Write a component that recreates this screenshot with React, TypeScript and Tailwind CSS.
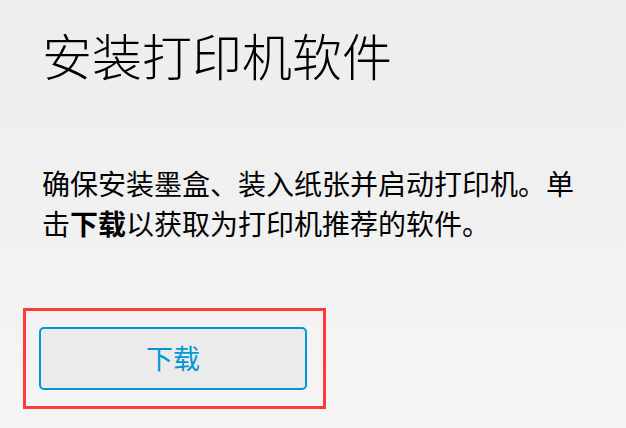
export default function App() {
  return (
    <div className="h-[428px] w-[626px] overflow-hidden bg-gradient-to-b from-[#ededed] to-[#f5f5f5] font-['Noto_Sans_CJK_SC','Noto_Sans',sans-serif] text-black">
      {/* Title */}
      <h1 className="pt-[24px] pl-[42px] text-[50px] leading-[60px] font-light">
        安装打印机软件
      </h1>

      {/* Description */}
      <p className="mt-[79px] pl-[42px] pr-[40px] text-[28px] leading-[40px]">
        确保安装墨盒、装入纸张并启动打印机。单击<b className="font-bold">下载</b>以获取为打印机推荐的软件。
      </p>

      {/* Focused download button */}
      <div className="mt-[65px] ml-[23px] w-[303px] border-[3px] border-[#ff3b3b] pt-[16px] pr-[15px] pb-[16px] pl-[13px]">
        <button className="flex h-[63px] w-[268px] items-center justify-center rounded-[5px] border-2 border-[#0096d6] bg-[#ebebeb] text-[27px] text-[#0096d6]">
          下载
        </button>
      </div>
    </div>
  );
}
